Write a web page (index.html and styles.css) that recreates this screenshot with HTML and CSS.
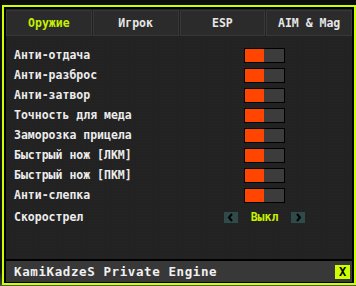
FILE: index.html
```html
<!DOCTYPE html>
<html>
<head>
<meta charset="utf-8">
<link rel="stylesheet" href="styles.css">
</head>
<body>
<div class="frame">
  <div class="panel">
    <div class="tabs">
      <div class="tab active">Оружие</div>
      <div class="tab">Игрок</div>
      <div class="tab">ESP</div>
      <div class="tab">AIM &amp; Mag</div>
    </div>
    <div class="content">
      <div class="row"><span class="label">Анти-отдача</span><span class="ctrl"><span class="toggle"><span class="on"></span><span class="off"></span></span></span></div>
      <div class="row"><span class="label">Анти-разброс</span><span class="ctrl"><span class="toggle"><span class="on"></span><span class="off"></span></span></span></div>
      <div class="row"><span class="label">Анти-затвор</span><span class="ctrl"><span class="toggle"><span class="on"></span><span class="off"></span></span></span></div>
      <div class="row"><span class="label">Точность для меда</span><span class="ctrl"><span class="toggle"><span class="on"></span><span class="off"></span></span></span></div>
      <div class="row"><span class="label">Заморозка прицела</span><span class="ctrl"><span class="toggle"><span class="on"></span><span class="off"></span></span></span></div>
      <div class="row"><span class="label">Быстрый нож [ЛКМ]</span><span class="ctrl"><span class="toggle"><span class="on"></span><span class="off"></span></span></span></div>
      <div class="row"><span class="label">Быстрый нож [ПКМ]</span><span class="ctrl"><span class="toggle"><span class="on"></span><span class="off"></span></span></span></div>
      <div class="row"><span class="label">Анти-слепка</span><span class="ctrl"><span class="toggle"><span class="on"></span><span class="off"></span></span></span></div>
      <div class="row row-select"><span class="label">Скорострел</span><span class="ctrl select">
        <span class="arrow"><svg width="14" height="11" viewBox="0 0 14 11"><polyline points="8,2 5,5.5 8,9" fill="none" stroke="#000" stroke-width="2"/></svg></span>
        <span class="value">Выкл</span>
        <span class="arrow"><svg width="14" height="11" viewBox="0 0 14 11"><polyline points="6,2 9,5.5 6,9" fill="none" stroke="#000" stroke-width="2"/></svg></span>
      </span></div>
    </div>
    <div class="footer">
      <span class="title">KamiKadzeS Private Engine</span>
      <span class="close">X</span>
    </div>
  </div>
</div>
</body>
</html>
```

FILE: styles.css
```css
html, body {
  margin: 0;
  padding: 0;
}
body {
  width: 356px;
  height: 286px;
  background: linear-gradient(to bottom, #0d0d0d 0, #111 270px, #3a3f30 283px, #556040 286px);
  font-family: "DejaVu Sans Mono", "Liberation Mono", monospace;
  font-weight: bold;
  overflow: hidden;
}
.frame {
  position: relative;
  margin: 5px 0 0 2px;
  width: 346px;
  height: 273px;
  border: 2px solid #ccff00;
  padding: 2px 2px 1px 2px;
  background: #000;
  display: flex;
}
.panel {
  flex: 1;
  display: flex;
  flex-direction: column;
  background-color: #222;
  background-image: radial-gradient(#262626 0.6px, transparent 0.7px);
  background-size: 3px 3px;
}
.tabs {
  display: flex;
  gap: 1px;
  height: 26px;
  margin-top: 1px;
}
.tab {
  flex: 1;
  display: flex;
  align-items: center;
  justify-content: center;
  background: #2b2b2b;
  border: 1px solid #383838;
  color: #e6e6e6;
  font-size: 11.5px;
}
.tab.active {
  color: #c6f000;
}
.content {
  flex: 1;
  padding: 9px 0 0 8px;
}
.row {
  display: grid;
  grid-template-columns: 210px 81px;
  height: 20px;
  align-items: center;
}
.row-select {
  margin-top: 2px;
}
.label {
  color: #ececec;
  font-size: 11.5px;
}
.ctrl {
  display: flex;
  justify-content: center;
  align-items: center;
}
.toggle {
  display: flex;
  width: 39px;
  height: 13px;
  border: 1px solid #000;
}
.toggle .on {
  width: 19px;
  background: #ff4500;
}
.toggle .off {
  flex: 1;
  background: #3c3c3c;
}
.select {
  justify-content: space-between;
}
.arrow {
  display: flex;
  width: 14px;
  height: 11px;
  background: #2e4a4a;
}
.value {
  color: #c6f000;
  font-size: 11.5px;
}
.footer {
  display: flex;
  align-items: center;
  justify-content: space-between;
  height: 21px;
  border-top: 2px solid #000;
  background: #383838;
  padding: 0 2px 0 8px;
}
.title {
  color: #f0f0f0;
  font-size: 12.5px;
  letter-spacing: 0.6px;
}
.close {
  display: flex;
  align-items: center;
  justify-content: center;
  width: 15px;
  height: 14px;
  background: #ccff00;
  color: #000;
  font-size: 12px;
}
```
